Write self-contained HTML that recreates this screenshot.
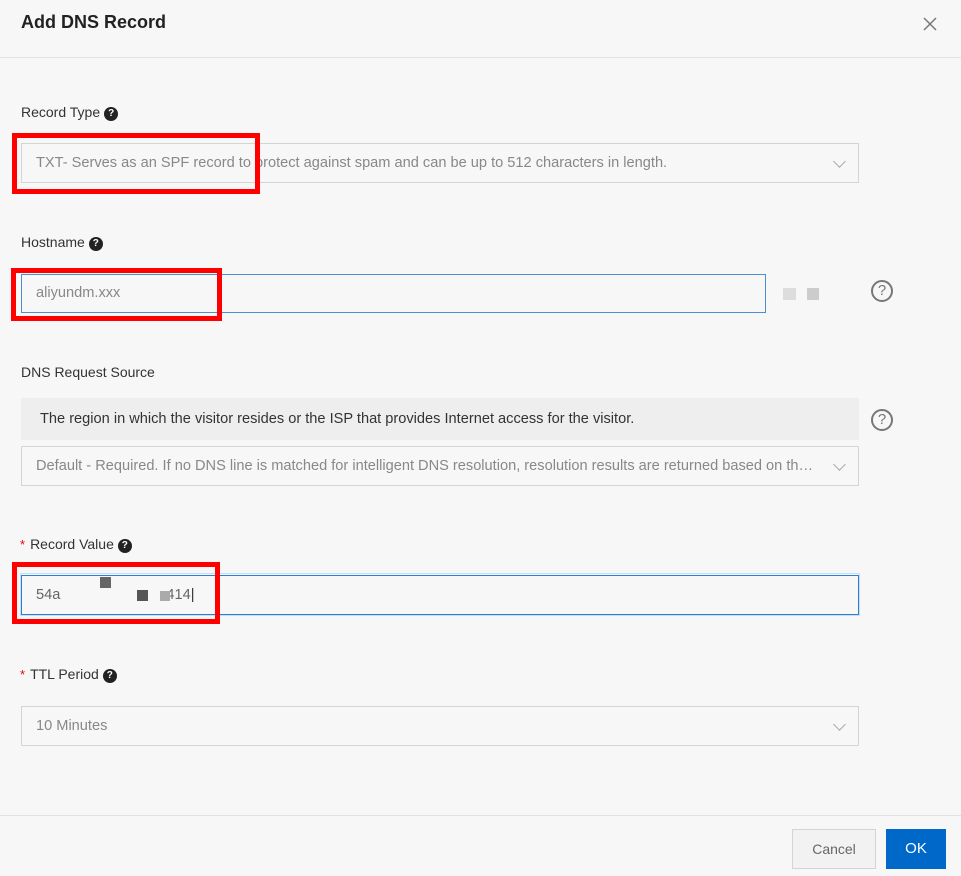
<!DOCTYPE html>
<html><head><meta charset="utf-8"><style>
*{box-sizing:border-box;margin:0;padding:0}
body{width:961px;height:876px;background:#f7f7f7;font-family:"Liberation Sans",sans-serif;position:relative;overflow:hidden;color:#333}
.a{position:absolute}
.t{font-size:18px;font-weight:bold;color:#222;left:21px;top:12px}
.hl{left:0;width:961px;height:1px;background:#e2e2e2}
.lbl{font-size:14px;color:#333;left:21px;white-space:nowrap}
.q{display:inline-block;width:14px;height:14px;border-radius:50%;background:#222;color:#fff;font-size:10px;font-weight:bold;text-align:center;line-height:14px;vertical-align:1px;margin-left:4px}
.box{left:21px;border:1px solid #d4d4d4;font-size:14.6px;color:#888;padding-left:14px;white-space:nowrap;overflow:hidden}
.chev{position:absolute;right:14px;top:13px;width:9px;height:9px;border-right:1px solid #aaa;border-bottom:1px solid #aaa;transform:rotate(45deg)}
.red{border:5px solid #f00}
.qc{width:22px;height:22px;border:2px solid #777;border-radius:50%;color:#777;font-size:15px;text-align:center;line-height:18px}
.ast{color:#e00;margin-right:5px;font-size:13px}
</style></head><body>
<div class="a t">Add DNS Record</div>
<svg class="a" style="left:923px;top:17px" width="14" height="14" viewBox="0 0 14 14"><path d="M1 1L13 13M13 1L1 13" stroke="#777" stroke-width="1.5"/></svg>
<div class="a hl" style="top:57px"></div>

<div class="a lbl" style="top:104px">Record Type<span class="q">?</span></div>
<div class="a box" style="top:143px;width:838px;height:40px;line-height:38px">TXT- Serves as an SPF record to protect against spam and can be up to 512 characters in length.<div class="chev"></div></div>
<div class="a red" style="left:12px;top:133px;width:248px;height:61px"></div>

<div class="a lbl" style="top:234px">Hostname<span class="q">?</span></div>
<div class="a box" style="top:274px;width:745px;height:39px;line-height:37px;border-color:#4a90d0">aliyundm.xxx</div>
<div class="a red" style="left:11px;top:268px;width:211px;height:53px"></div>
<div class="a" style="left:783px;top:288px;width:13px;height:12px;background:#ddd"></div>
<div class="a" style="left:807px;top:288px;width:12px;height:12px;background:#ccc"></div>
<div class="a qc" style="left:871px;top:280px">?</div>

<div class="a lbl" style="top:364px">DNS Request Source</div>
<div class="a" style="left:21px;top:398px;width:838px;height:42px;background:#eee;font-size:14.6px;color:#333;padding-left:19px;line-height:42px">The region in which the visitor resides or the ISP that provides Internet access for the visitor.</div>
<div class="a qc" style="left:871px;top:409px">?</div>
<div class="a box" style="top:446px;width:838px;height:40px;line-height:38px;padding-right:40px;text-overflow:ellipsis">Default - Required. If no DNS line is matched for intelligent DNS resolution, resolution results are returned based on the default line.<div class="chev"></div></div>

<div class="a lbl" style="top:536px;left:20px"><span class="ast">*</span>Record Value<span class="q">?</span></div>
<div class="a" style="left:20px;top:573px;width:840px;height:43px;border:1px solid #c8def3"></div>
<div class="a box" style="top:575px;width:838px;height:40px;line-height:38px;border-color:#2a80d0;color:#666">54a<span style="display:inline-block;width:106px"></span>414<span style="color:#333">|</span></div>
<div class="a" style="left:100px;top:577px;width:11px;height:11px;background:#666"></div>
<div class="a" style="left:137px;top:590px;width:11px;height:11px;background:#555"></div>
<div class="a" style="left:160px;top:591px;width:10px;height:10px;background:#aaa"></div>
<div class="a red" style="left:12px;top:562px;width:208px;height:62px"></div>

<div class="a lbl" style="top:666px;left:20px"><span class="ast">*</span>TTL Period<span class="q">?</span></div>
<div class="a box" style="top:706px;width:838px;height:40px;line-height:38px">10 Minutes<div class="chev"></div></div>

<div class="a hl" style="top:815px"></div>
<div class="a" style="left:792px;top:829px;width:84px;height:40px;border:1px solid #d4d4d4;background:#f2f2f2;color:#666;font-size:14px;text-align:center;line-height:38px">Cancel</div>
<div class="a" style="left:886px;top:829px;width:60px;height:40px;background:#0068c8;color:#fff;font-size:15px;text-align:center;line-height:40px">OK</div>
</body></html>
